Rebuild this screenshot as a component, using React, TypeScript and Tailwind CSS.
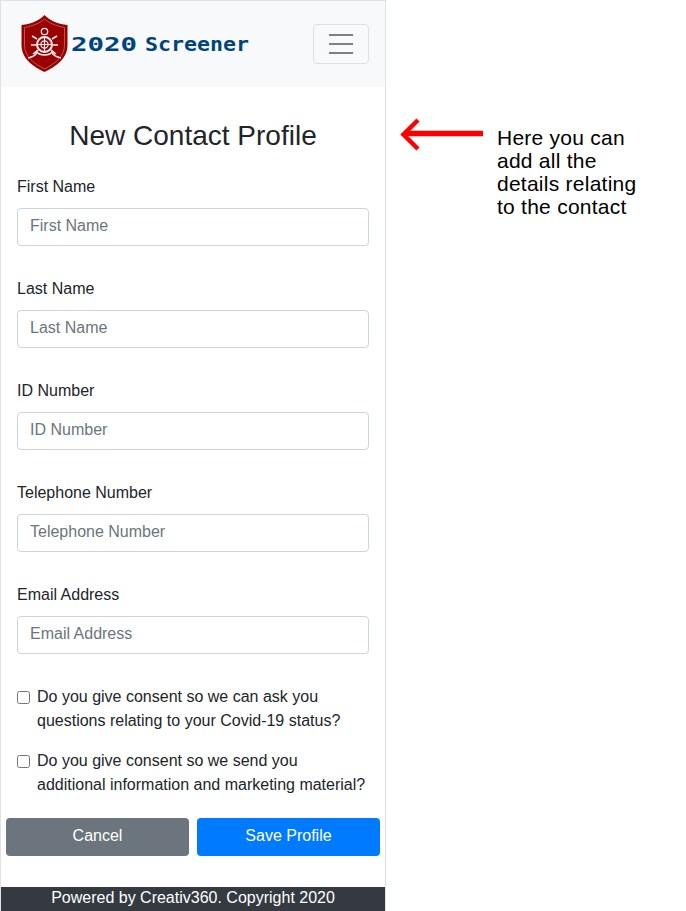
import React from 'react';

const fields = ['First Name', 'Last Name', 'ID Number', 'Telephone Number', 'Email Address'];

const consents = [
  ['Do you give consent so we can ask you', 'questions relating to your Covid-19 status?'],
  ['Do you give consent so we send you', 'additional information and marketing material?'],
];

const Logo = () => (
  <svg width="48" height="58" viewBox="0 0 48 58" className="shrink-0">
    <path d="M23.5 0 C28 5 36 9 46.5 10 L46.5 30 C46.5 44 34 52 23.5 57 C13 52 0.5 44 0.5 30 L0.5 10 C11 9 19 5 23.5 0 Z" fill="#990000" />
    <path d="M23.5 4 C28 8 35 11 43.5 12.5 L43.5 30 C43.5 42 33 49 23.5 54 C14 49 3.5 42 3.5 30 L3.5 12.5 C12 11 19 8 23.5 4 Z" fill="none" stroke="#c86a6a" strokeWidth="0.8" />
    <g fill="none" stroke="#fbeeee">
      <circle cx="23.5" cy="29.5" r="7.5" strokeWidth="2" />
      <circle cx="23.5" cy="29.5" r="3.6" strokeWidth="1.2" />
      <path d="M23.5 23 V36 M17 29.5 H30" strokeWidth="1.2" />
      <circle cx="23.5" cy="16.5" r="3.2" strokeWidth="1.3" />
      <path d="M16 24 L11 21 M15 30 H10 M17 35 L12 39 M31 24 L36 21 M32 30 H37 M30 35 L35 39" strokeWidth="1.6" />
      <path d="M7 43 C12 42 15 40 16 37 C19 41 28 41 31 37 C32 40 35 42 40 43" strokeWidth="1.6" />
    </g>
  </svg>
);

export default function App() {
  return (
    <div className="flex items-start bg-white font-['Liberation_Sans',sans-serif] text-[#212529]">
      <div className="flex h-[911px] w-[386px] shrink-0 flex-col border-x border-t border-[#dee2e6]">
        <nav className="flex h-[86px] shrink-0 items-center justify-between bg-[#f8f9fa] pl-[20px] pr-[16px]">
          <div className="flex items-center gap-[2px]">
            <Logo />
            <span className="flex whitespace-nowrap font-['DejaVu_Sans_Mono',monospace] text-[20px] font-bold text-[#00447c]">
              <span className="mr-[26px] inline-block origin-left scale-x-[1.37]">2020</span>
              <span className="inline-block origin-left scale-x-[1.08]">Screener</span>
            </span>
          </div>
          <button className="flex h-[40px] w-[56px] flex-col items-center justify-center gap-[7px] rounded border border-[#dfe0e1]">
            <span className="h-[2px] w-[24px] bg-[#808080]" />
            <span className="h-[2px] w-[24px] bg-[#808080]" />
            <span className="h-[2px] w-[24px] bg-[#808080]" />
          </button>
        </nav>

        <h1 className="mt-[30px] text-center text-[28px] leading-[38px]">New Contact Profile</h1>

        <form className="mt-[20px] flex flex-1 flex-col">
          <div className="flex flex-col gap-[15px] px-[16px]">
            {fields.map((field) => (
              <div key={field} className="h-[87px]">
                <label className="block h-[24px] text-base leading-[24px]">{field}</label>
                <input
                  placeholder={field}
                  className="mt-[9px] block h-[38px] w-full rounded border border-[#ced4da] bg-white px-[12px] pb-[2px] text-base placeholder:text-[#6c757d]"
                />
              </div>
            ))}
          </div>

          <div className="mt-[15px] flex flex-col gap-[16px] px-[16px]">
            {consents.map((lines) => (
              <label key={lines[0]} className="flex text-base leading-[24px]">
                <input type="checkbox" className="mt-[6px] h-[13px] w-[13px] shrink-0" />
                <span className="ml-[7px] whitespace-nowrap">
                  {lines[0]}
                  <br />
                  {lines[1]}
                </span>
              </label>
            ))}
          </div>

          <div className="mt-[21px] flex gap-[8px] px-[5px]">
            <button type="button" className="h-[38px] flex-1 rounded bg-[#6c757d] pb-[2px] text-base text-white">
              Cancel
            </button>
            <button type="button" className="h-[38px] flex-1 rounded bg-[#007bff] pb-[2px] text-base text-white">
              Save Profile
            </button>
          </div>
        </form>

        <footer className="h-[24px] shrink-0 bg-[#343a40] text-center text-base leading-[22px] text-white">
          Powered by Creativ360. Copyright 2020
        </footer>
      </div>

      <div className="ml-[14px] mt-[118px] flex items-start">
        <svg width="84" height="36" viewBox="0 0 84 36" className="shrink-0">
          <path d="M83 15.5 H4" fill="none" stroke="#ff0000" strokeWidth="5.5" />
          <path d="M18 2 L3.5 16.5 L18 31" fill="none" stroke="#ff0000" strokeWidth="4.5" />
        </svg>
        <p className="ml-[13px] mt-[8px] whitespace-nowrap text-[21px] leading-[23px] tracking-[0.25px] text-black">
          Here you can
          <br />
          add all the
          <br />
          details relating
          <br />
          to the contact
        </p>
      </div>
    </div>
  );
}
